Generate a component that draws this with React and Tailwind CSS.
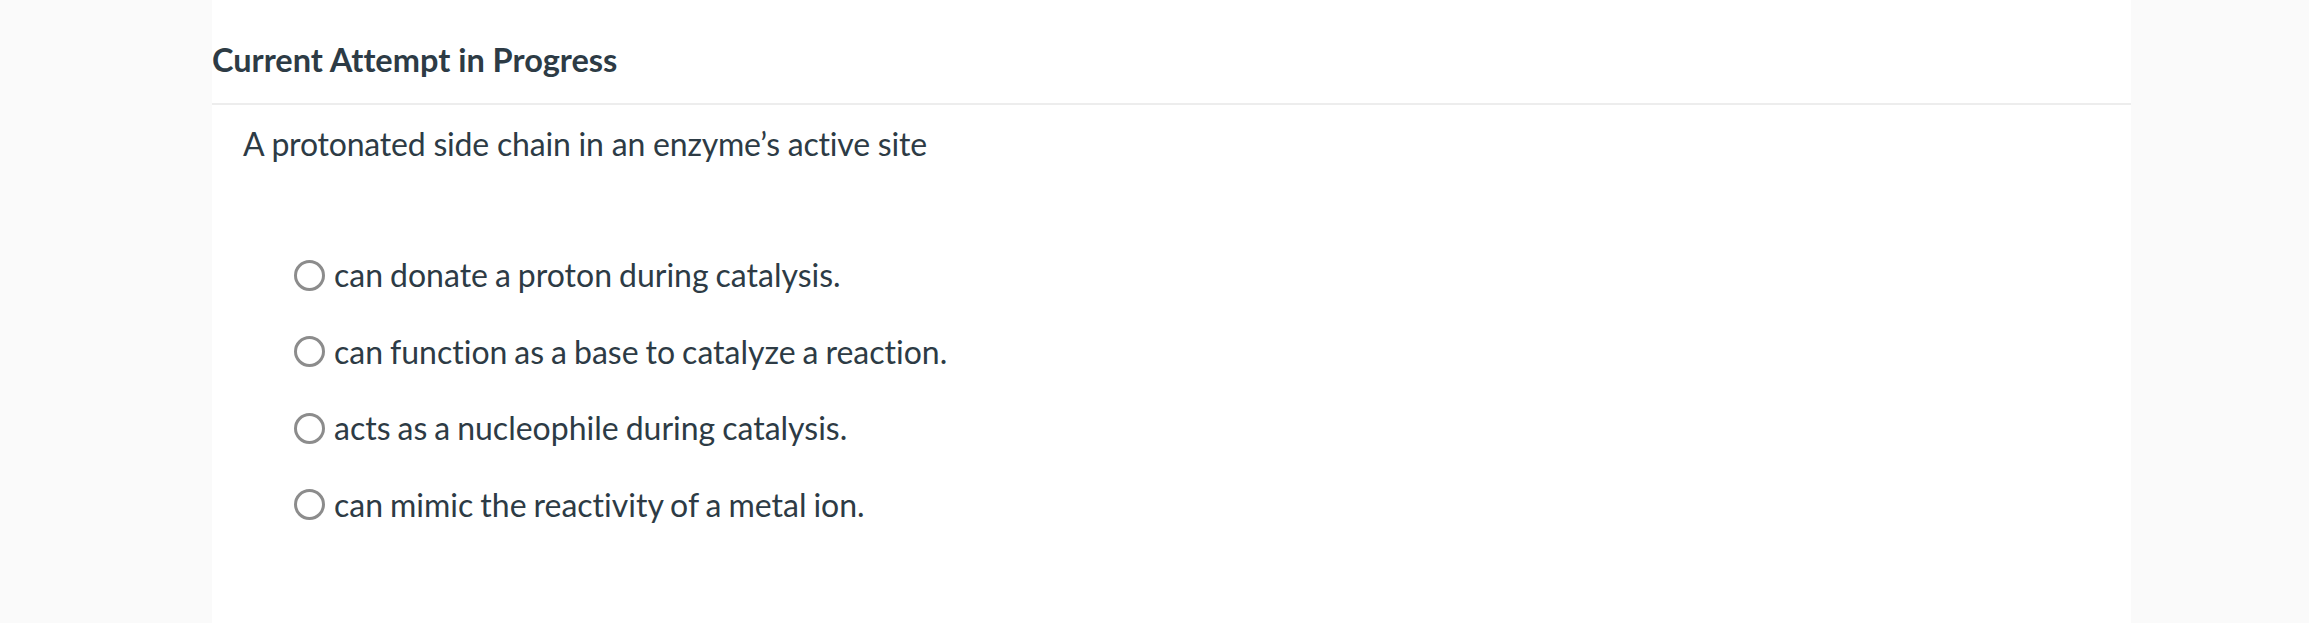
export default function App() {
  const options = [
    "can donate a proton during catalysis.",
    "can function as a base to catalyze a reaction.",
    "acts as a nucleophile during catalysis.",
    "can mimic the reactivity of a metal ion.",
  ];
  return (
    <div className="w-full h-[623px] bg-[#fafafa] overflow-hidden [font-variant-ligatures:none]" style={{ fontFamily: "Lato, 'Open Sans', sans-serif" }}>
      <div className="ml-[212px] w-[1919px] h-full bg-white text-[#2d3b45]">
        <div className="h-[105px] border-b-2 border-[#ededed] pt-[40px]">
          <h1 className="text-[32.5px] leading-[1.2] font-bold m-0">Current Attempt in Progress</h1>
        </div>
        <div className="pl-[31px] pt-[20px]">
          <p className="text-[32px] leading-[1.2] tracking-[-0.2px] m-0">A protonated side chain in an enzyme’s active site</p>
        </div>
        <div className="pl-[82px] pt-[94px] flex flex-col gap-[40.5px]">
          {options.map((o) => (
            <label key={o} className="flex items-center gap-[9px] h-[36px]">
              <span className="block w-[31px] h-[31px] rounded-full border-[3px] border-[#8c8c8c] bg-white shrink-0" />
              <span className="text-[32px] leading-[1.2] [word-spacing:-1.2px]">{o}</span>
            </label>
          ))}
        </div>
      </div>
    </div>
  );
}
